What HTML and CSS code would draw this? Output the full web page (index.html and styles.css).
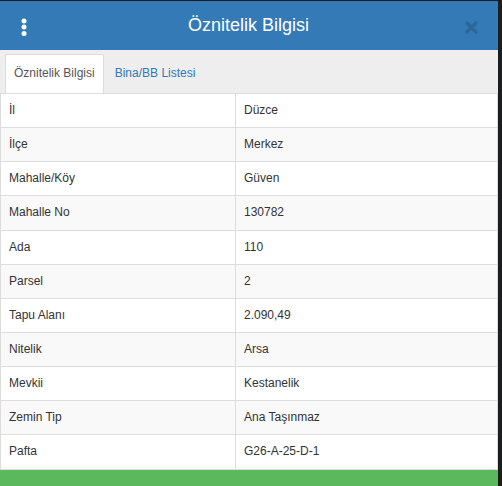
FILE: index.html
```html
<!DOCTYPE html>
<html lang="tr">
	<head>
		<meta charset="UTF-8" />
		<meta name="viewport" content="width=device-width, initial-scale=1.0" />
		<title>Öznitelik Bilgisi</title>
		<link rel="stylesheet" href="styles.css">
	</head>
	<body>
		<div class="panel">
			<div class="panelHead">
				<button class="menuBtn" type="button">
					<svg width="6" height="18" viewBox="0 0 6 18">
						<circle cx="3" cy="3" r="2.5" fill="#fff" />
						<circle cx="3" cy="9" r="2.5" fill="#fff" />
						<circle cx="3" cy="15.5" r="2.5" fill="#fff" />
					</svg>
				</button>
				<h4 class="title">Öznitelik Bilgisi</h4>
				<button class="closeBtn" type="button">
					<svg width="13" height="13" viewBox="0 0 13 13">
						<path d="M2 2 L11 11 M11 2 L2 11" stroke="#2d6699" stroke-width="3.2" stroke-linecap="round" />
					</svg>
				</button>
			</div>

			<ul class="tabs">
				<li class="active">Öznitelik Bilgisi</li>
				<li><a href="#">Bina/BB Listesi</a></li>
			</ul>

			<table class="info">
				<tr><td>İl</td><td>Düzce</td></tr>
				<tr><td>İlçe</td><td>Merkez</td></tr>
				<tr><td>Mahalle/Köy</td><td>Güven</td></tr>
				<tr><td>Mahalle No</td><td>130782</td></tr>
				<tr><td>Ada</td><td>110</td></tr>
				<tr><td>Parsel</td><td>2</td></tr>
				<tr><td>Tapu Alanı</td><td>2.090,49</td></tr>
				<tr><td>Nitelik</td><td>Arsa</td></tr>
				<tr><td>Mevkii</td><td>Kestanelik</td></tr>
				<tr><td>Zemin Tip</td><td>Ana Taşınmaz</td></tr>
				<tr><td>Pafta</td><td>G26-A-25-D-1</td></tr>
			</table>

			<div class="panelFoot"></div>
		</div>
	</body>
</html>
```

FILE: styles.css
```css
* {
	padding: 0;
	margin: 0;
	box-sizing: border-box;
}
ul {
	list-style: none;
}

body {
	background-color: #1c1d1f;
	font-family: "Liberation Sans", Arial, sans-serif;
	font-size: 12px;
	color: #333;
	overflow: hidden;
}

.panel {
	width: 498px;
	margin-top: 1px;
	background-color: #fff;
}

.panelHead {
	height: 49px;
	background-color: #337ab7;
	display: flex;
	align-items: center;
	padding: 0 15px 0 21px;
}
.menuBtn,
.closeBtn {
	background: none;
	border: 0;
	display: flex;
	cursor: pointer;
}
.menuBtn {
	margin-top: 2px;
}
.title {
	flex: 1;
	text-align: center;
	color: #fff;
	font-size: 18px;
	font-weight: normal;
	margin-left: 5px;
	padding-bottom: 1px;
}
.closeBtn {
	margin-right: 5px;
	margin-top: 3px;
}

.tabs {
	display: flex;
	height: 43px;
	padding: 4px 0 0 5px;
	background-color: #eee;
}
.tabs li {
	padding: 10px 8px;
	line-height: 17px;
	border: 1px solid transparent;
	border-bottom: 0;
	margin-right: 2px;
	border-radius: 2px 2px 0 0;
}
.tabs li.active {
	background-color: #fff;
	border-color: #ddd;
	color: #555;
}
.tabs a {
	color: #337ab7;
	text-decoration: none;
}

.info {
	width: 498px;
	border-collapse: collapse;
}
.info td {
	border: 1px solid #ddd;
	padding: 8px;
	line-height: 1.42857;
	vertical-align: top;
}
.info td:first-child {
	width: 235px;
}
.info tr:nth-child(even) td {
	background-color: #f9f9f9;
}

.panelFoot {
	height: 20px;
	background-color: #5cb85c;
}
```
